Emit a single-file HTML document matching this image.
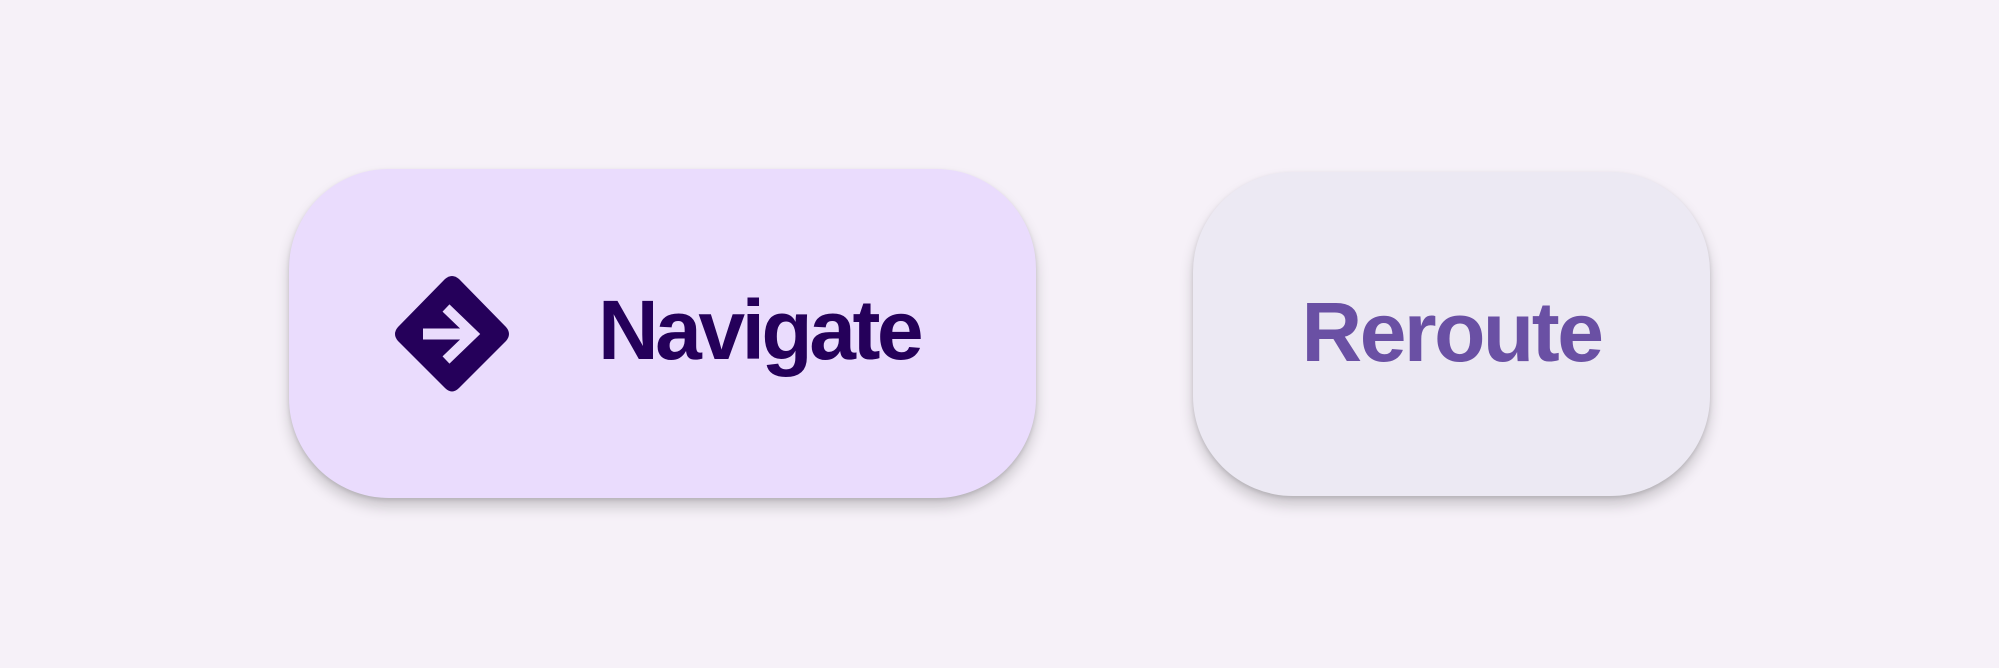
<!DOCTYPE html>
<html><head><style>
html,body{margin:0;padding:0;width:1999px;height:668px;background:#f6f1f8;overflow:hidden}
.b{position:absolute;display:flex;align-items:center;justify-content:center;font-family:"Liberation Sans",sans-serif;font-weight:bold;font-size:84px;letter-spacing:-2.5px;box-shadow:0 9px 14px rgba(0,0,0,0.18),0 2px 4px rgba(0,0,0,0.12)}
#nav{left:289px;top:169px;width:747px;height:329px;border-radius:100px;background:#eadcfd;color:#25005a}
#rer{left:1193px;top:172px;width:517px;height:324px;border-radius:100px;background:#ece9f3;color:#6a50a4;padding-bottom:4px;box-sizing:border-box}
</style></head><body>
<div class="b" id="nav"></div>
<svg style="position:absolute;left:393px;top:275px" width="118" height="118" viewBox="0 0 118 118">
<path d="M52 4 Q59 -2 66 4 L113 52 Q119 59 113 66 L66 113 Q59 120 52 113 L5 66 Q-1 59 5 52 Z" fill="#25005a"/>
<path d="M30 59 H80" stroke="#eadcfd" stroke-width="11" fill="none"/>
<path d="M53 33 L80 59 L53 85" stroke="#eadcfd" stroke-width="10" fill="none"/>
</svg>
<div style="position:absolute;left:598px;top:288px;font-family:'Liberation Sans',sans-serif;font-weight:bold;font-size:84px;letter-spacing:-3.5px;color:#25005a;line-height:84px">Navigate</div>
<div class="b" id="rer">Reroute</div>
</body></html>
